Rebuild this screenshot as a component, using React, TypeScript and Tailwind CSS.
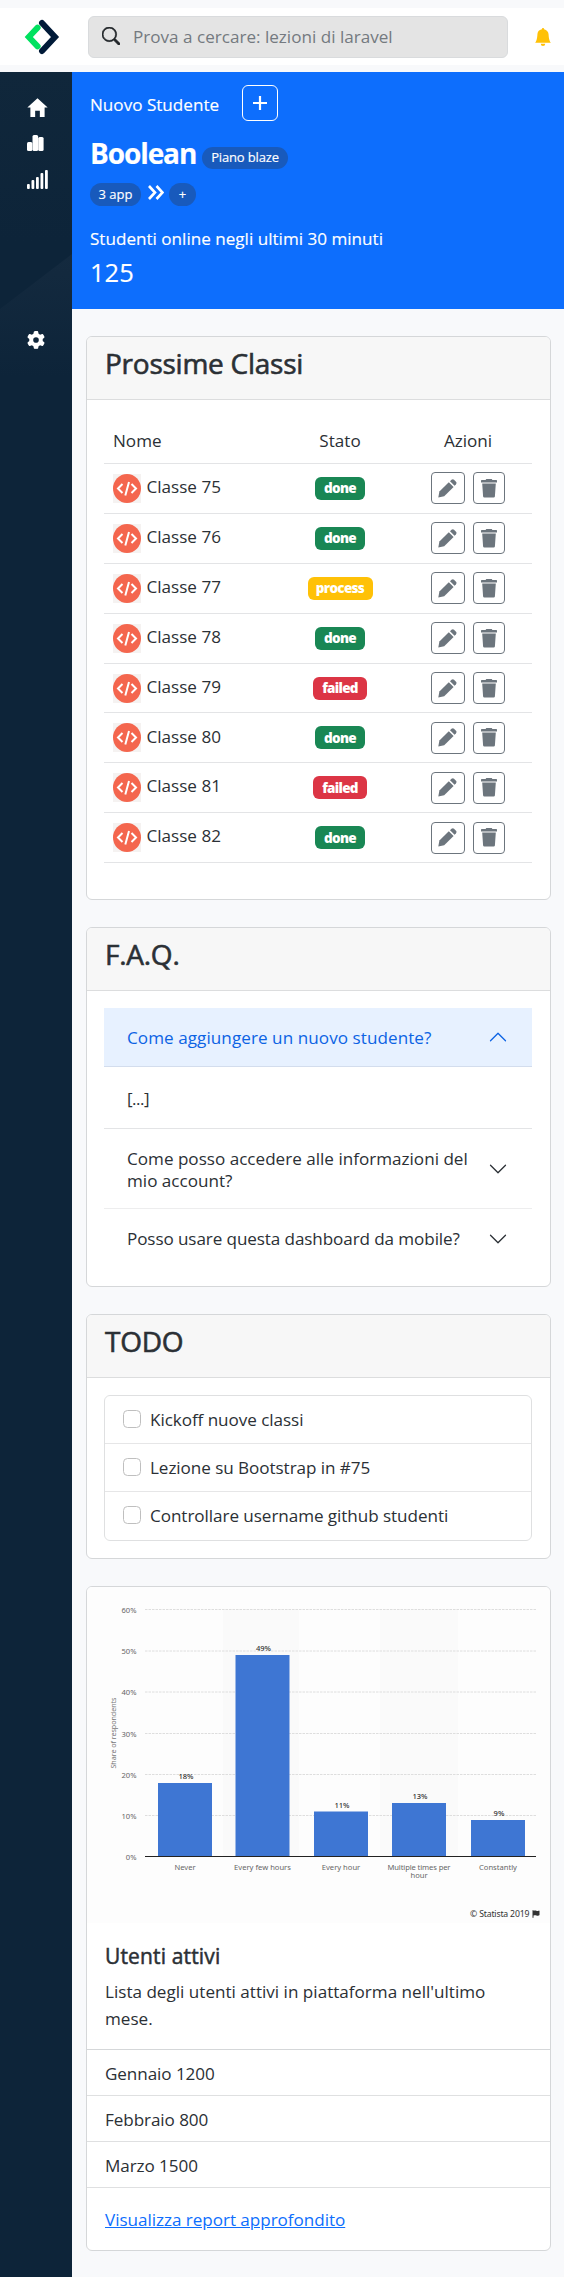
import { BsBellFill, BsSearch, BsChevronDown, BsChevronUp } from "react-icons/bs";
import { FaFlag, FaGear } from "react-icons/fa6";
import { IoMdHome } from "react-icons/io";

const classes = [
  { name: "Classe 75", state: "done" },
  { name: "Classe 76", state: "done" },
  { name: "Classe 77", state: "process" },
  { name: "Classe 78", state: "done" },
  { name: "Classe 79", state: "failed" },
  { name: "Classe 80", state: "done" },
  { name: "Classe 81", state: "failed" },
  { name: "Classe 82", state: "done" },
];

const badge: Record<string, string> = {
  done: "bg-[#198754] w-[50px]",
  process: "bg-[#ffc107] w-[65px]",
  failed: "bg-[#dc3545] w-[54px]",
};

function Logo() {
  return (
    <svg width="36" height="36" viewBox="0 0 36 36" fill="none" strokeWidth="6" strokeLinecap="round" strokeLinejoin="miter">
      <path d="M13.6 8.6 4.8 18 13.6 27.4" stroke="#00e15f" />
      <path d="M18 4 31 18 18 32" stroke="#001a38" />
    </svg>
  );
}

function CodeBadge() {
  return (
    <svg width="28" height="29" viewBox="0 0 28 29" className="bg-[#f5f2f1]" fill="none" stroke="white" strokeWidth="2">
      <ellipse cx="14" cy="14.5" rx="14" ry="14.5" fill="#f4664e" stroke="none" />
      <path d="M9.5 10 5 14.5l4.5 4.5M18.5 10l4.5 4.5-4.5 4.5M16 8 12.3 21.5" />
    </svg>
  );
}

function PencilIcon() {
  return (
    <svg width="19" height="19" viewBox="0 0 19 19" fill="currentColor">
      <path d="M0.3 18.5 1.4 12.6 10.8 3.2 15.6 8 6.2 17.2z" />
      <path d="M12 2.2 13.5 0.8Q14.8-.3 16 .7L18 2.8Q19 4 18 5.2L16.6 6.8z" />
    </svg>
  );
}

function TrashIcon() {
  return (
    <svg width="16" height="19" viewBox="0 0 16 19" fill="currentColor">
      <path d="M0 1.6Q0 1 .8 1H4.6L5.3 0H10.7L11.4 1H15.2Q16 1 16 1.6V3.4H0zM1.2 4.4H14.8L13.9 17.5Q13.7 18.6 12.7 18.6H3.3Q2.3 18.6 2.1 17.5z" />
    </svg>
  );
}

function Header({ title }: { title: string }) {
  return (
    <div className="h-[63px] border-b border-[#dcddde] bg-[#f7f7f7] pl-[18px] pt-[6px]">
      <h2 className="text-[28px] leading-[40px] tracking-[-0.25px] [-webkit-text-stroke:0.6px_currentColor]">{title}</h2>
    </div>
  );
}

const bars = [
  { x: 158, y: 203, v: "18%", l: ["Never"] },
  { x: 235.5, y: 75, v: "49%", l: ["Every few hours"] },
  { x: 314, y: 231.5, v: "11%", l: ["Every hour"] },
  { x: 392, y: 223, v: "13%", l: ["Multiple times per", "hour"] },
  { x: 471, y: 240, v: "9%", l: ["Constantly"] },
];
const grid = [29.5, 71, 112, 153.5, 194.5, 235.5, 276.5];

function Chart() {
  return (
    <svg width="463" height="336" viewBox="87 7 463 336" className="block" fontFamily="'Noto Sans', sans-serif" fontSize="7.6" fill="#666">
      <rect x="87" y="7" width="463" height="336" fill="#fdfdfd" />
      <rect x="223" y="29" width="76" height="247" fill="#fafafa" />
      <rect x="380" y="29" width="78" height="247" fill="#fafafa" />
      {grid.map((y, i) => (
        <g key={y}>
          {i < 6 && <path d={`M145 ${y}H536`} stroke="#dedede" strokeDasharray="2.5 1" />}
          <text x="136.5" y={y + 3.2} textAnchor="end">{60 - i * 10}%</text>
        </g>
      ))}
      <text transform="translate(115.5 153) rotate(-90)" textAnchor="middle" fontSize="7.2" textLength="71" fill="#777">Share of respondents</text>
      {bars.map((b) => (
        <g key={b.x}>
          <rect x={b.x} y={b.y} width="54" height={276.5 - b.y} fill="#3e76d3" />
          <text x={b.x + 28} y={b.y - 4} textAnchor="middle" fill="#333" fontWeight="500">{b.v}</text>
          {b.l.map((t, i) => (
            <text key={t} x={b.x + 27} y={289.5 + i * 8} textAnchor="middle" textLength={t.length > 16 ? 63 : undefined}>{t}</text>
          ))}
        </g>
      ))}
      <path d="M145 276.5H536" stroke="#222" />
      <text x="470" y="337" fontSize="8.7" textLength="59.5" fill="#333">© Statista 2019</text>
      <FaFlag x="532" y="330" width="8" height="7" size={8} color="#333" />
    </svg>
  );
}

export default function App() {
  return (
    <div className="h-[2277px] w-[564px] overflow-hidden bg-[#f8f9fb] pt-2 font-['Open_Sans','Noto_Sans',sans-serif] text-[17.1px] text-[#2b3035]">
      <header className="mb-[7px] flex h-[57px] items-center bg-white pl-6">
        <div className="w-16"><Logo /></div>
        <div className="flex h-[42px] w-[420px] items-center rounded-md border border-[#d9dbdd] bg-[#e4e4e4] pl-[13px] text-[#747a80]">
          <BsSearch size={18} className="-mt-0.5 mr-[13px] text-[#212529] [stroke-width:0.6] [stroke:currentColor]" />
          <span className="whitespace-nowrap">Prova a cercare: lezioni di laravel</span>
        </div>
        <BsBellFill size={18} className="ml-[26px] text-[#ffc107]" />
      </header>
      <div className="flex h-[2205px]">
        <nav className="relative w-[72px] bg-[#0d2439] text-white">
          <svg className="absolute left-0 top-0" width="72" height="330" viewBox="0 0 72 330">
            <defs><linearGradient id="shade" x2="0" y2="1"><stop stopColor="#142a3f" /><stop offset="1" stopColor="#0d2439" /></linearGradient><linearGradient id="top" x2="0" y2="1"><stop stopColor="#10273b" /><stop offset="1" stopColor="#0d2439" /></linearGradient></defs>
            <path d="M0 0H72V170H0z" fill="url(#top)" />
            <path d="M0 237 72 182V305H0z" fill="url(#shade)" />
          </svg>
          <div className="relative flex flex-col pl-[27px] pt-6">
            <IoMdHome size={25} className="-ml-[2px] -mt-px" />
            <svg className="mt-[15px]" width="17" height="16" viewBox="0 0 17 16" fill="white"><rect y="7" width="5.4" height="9" rx="1.5" /><rect x="5.5" width="5.6" height="16" rx="1.5" /><rect x="11.2" y="2" width="5.4" height="14" rx="1.5" /></svg>
            <svg className="mt-[19px]" width="21" height="19" viewBox="0 0 21 19" fill="white"><rect y="14" width="2.8" height="5" rx="1" /><rect x="4.5" y="10" width="2.8" height="9" rx="1" /><rect x="9" y="7" width="2.8" height="12" rx="1" /><rect x="13.5" y="3" width="2.8" height="16" rx="1" /><rect x="18" width="2.8" height="19" rx="1" /></svg>
            <FaGear size={18} className="mt-[142px]" />
          </div>
        </nav>
        <main className="w-[492px]">
          <section className="h-[237px] bg-[#0d6efd] pl-[18px] pt-[13px] text-white [-webkit-text-stroke:0.15px_currentColor]">
            <div className="flex h-9 items-center">
              <span className="w-[152px] pt-1">Nuovo Studente</span>
              <button className="flex size-9 items-center justify-center rounded-md border border-white"><svg width="16" height="16" stroke="white" strokeWidth="2.2"><path d="M8 1V15M1 8H15" /></svg></button>
            </div>
            <div className="mt-[12px] flex h-10 items-center">
              <h1 className="w-[112px] text-[28px] font-bold leading-10 tracking-[-1.1px]">Boolean</h1>
              <span className="mt-[10px] flex h-[22px] w-[86px] items-center justify-center rounded-full bg-[#185abc] text-[13px] tracking-[-0.15px]">Piano blaze</span>
            </div>
            <div className="mt-[10px] flex h-[23px] items-center">
              <span className="flex h-[23px] w-[51px] items-center justify-center rounded-full bg-[#185abc] text-[13px]">3 app</span>
              <svg className="ml-[7px] mr-[5px] -mt-1" width="16" height="15" fill="none" stroke="white" strokeWidth="2.6"><path d="M1 1 7 7.5 1 14M8.5 1l6 6.5-6 6.5" /></svg>
              <span className="flex h-[23px] w-[27px] items-center justify-center rounded-full bg-[#185abc] text-[13px]">+</span>
            </div>
            <p className="mt-[21px] whitespace-nowrap leading-6">Studenti online negli ultimi 30 minuti</p>
            <p className="mt-[5px] text-[25.5px] leading-8">125</p>
          </section>

          <div className="ml-[14px] mt-[27px] flex w-[465px] flex-col gap-[27px]">
            <section className="h-[564px] overflow-hidden rounded-md border border-[#d5d7d9] bg-white">
              <Header title="Prossime Classi" />
              <div className="ml-[17px] mr-[18px] pt-[16px]">
                <div className="grid h-[48px] grid-cols-[172px_128px_128px] items-center border-b border-[#e3e4e6]">
                  <span className="pl-[9px] pt-[3px]">Nome</span><span className="pt-[3px] text-center">Stato</span><span className="pt-[3px] text-center">Azioni</span>
                </div>
                {classes.map((c) => (
                  <div key={c.name} className="grid h-[49.9px] grid-cols-[172px_128px_128px] items-center border-b border-[#e3e4e6]">
                    <div className="flex items-center pl-[9px]"><CodeBadge /><span className="-mt-[3px] whitespace-nowrap pl-[5.5px]">{c.name}</span></div>
                    <div className="flex justify-center"><span className={`flex h-[23px] items-center justify-center rounded-[6px] text-[13.5px] font-extrabold tracking-[-0.7px] text-white ${badge[c.state]}`}>{c.state}</span></div>
                    <div className="flex justify-center gap-[8px] pr-px text-[#6c757d]">
                      <button className="flex h-8 w-[34px] items-center justify-center rounded border border-[#6c757d]"><PencilIcon /></button>
                      <button className="flex h-8 w-8 items-center justify-center rounded border border-[#6c757d]"><TrashIcon /></button>
                    </div>
                  </div>
                ))}
              </div>
            </section>

            <section className="h-[360px] overflow-hidden rounded-md border border-[#d5d7d9] bg-white">
              <Header title="F.A.Q." />
              <div className="ml-[17px] mr-[18px] pt-[17px]">
                <div className="flex h-[59px] items-center justify-between border-b border-[#d3dded] bg-[#e7f1ff] pl-[23px] pr-6 text-[#0c63e4]"><span className="whitespace-nowrap pt-px tracking-[0.06px]">Come aggiungere un nuovo studente?</span><BsChevronUp size={20} /></div>
                <div className="flex h-[62px] items-center border-b border-[#e3e4e6] pl-[23px] pt-0.5"><span className="tracking-[-0.5px]">[...]</span></div>
                <div className="flex h-[80px] items-center justify-between border-b border-[#ededee] pl-[23px] pr-6"><span className="whitespace-nowrap pt-0.5 leading-[22px]">Come posso accedere alle informazioni del<br />mio account?</span><BsChevronDown size={20} className="shrink-0" /></div>
                <div className="flex h-[60px] items-center justify-between pl-[23px] pr-6"><span className="whitespace-nowrap tracking-[-0.1px]">Posso usare questa dashboard da mobile?</span><BsChevronDown size={20} className="shrink-0" /></div>
              </div>
            </section>

            <section className="h-[245px] overflow-hidden rounded-md border border-[#d5d7d9] bg-white">
              <Header title="TODO" />
              <div className="ml-[17px] mr-[18px] mt-[17px] h-[146px] rounded-md border border-[#dfe0e1]">
                {["Kickoff nuove classi", "Lezione su Bootstrap in #75", "Controllare username github studenti"].map((t) => (
                  <label key={t} className="flex h-12 items-center border-b border-[#e6e6e7] pl-[18px] tracking-[-0.06px] last:border-b-0">
                    <input type="checkbox" className="mr-[9px] mt-[-2px] size-[18px] appearance-none rounded-[4.5px] border border-[#bfbfbf]" />{t}
                  </label>
                ))}
              </div>
            </section>

            <section className="h-[665px] overflow-hidden rounded-md border border-[#d5d7d9] bg-white">
              <Chart />
              <div className="h-[127px] border-b border-[#d5d7d9] pl-[18px] pt-5">
                <h3 className="text-[21px] leading-[27px] tracking-[0.15px] [-webkit-text-stroke:0.5px_currentColor]">Utenti attivi</h3>
                <p className="mt-[8px] whitespace-nowrap leading-[27px]">Lista degli utenti attivi in piattaforma nell'ultimo<br />mese.</p>
              </div>
              {["Gennaio 1200", "Febbraio 800", "Marzo 1500"].map((t) => (
                <div key={t} className="flex h-[46px] items-center border-b border-[#dfe0e1] pl-[18px] pt-[3px] tracking-[-0.08px]">{t}</div>
              ))}
              <div className="flex h-16 items-center pl-[18px]"><a className="tracking-[-0.04px] text-[#0d6efd] underline">Visualizza report approfondito</a></div>
            </section>
          </div>
        </main>
      </div>
    </div>
  );
}
